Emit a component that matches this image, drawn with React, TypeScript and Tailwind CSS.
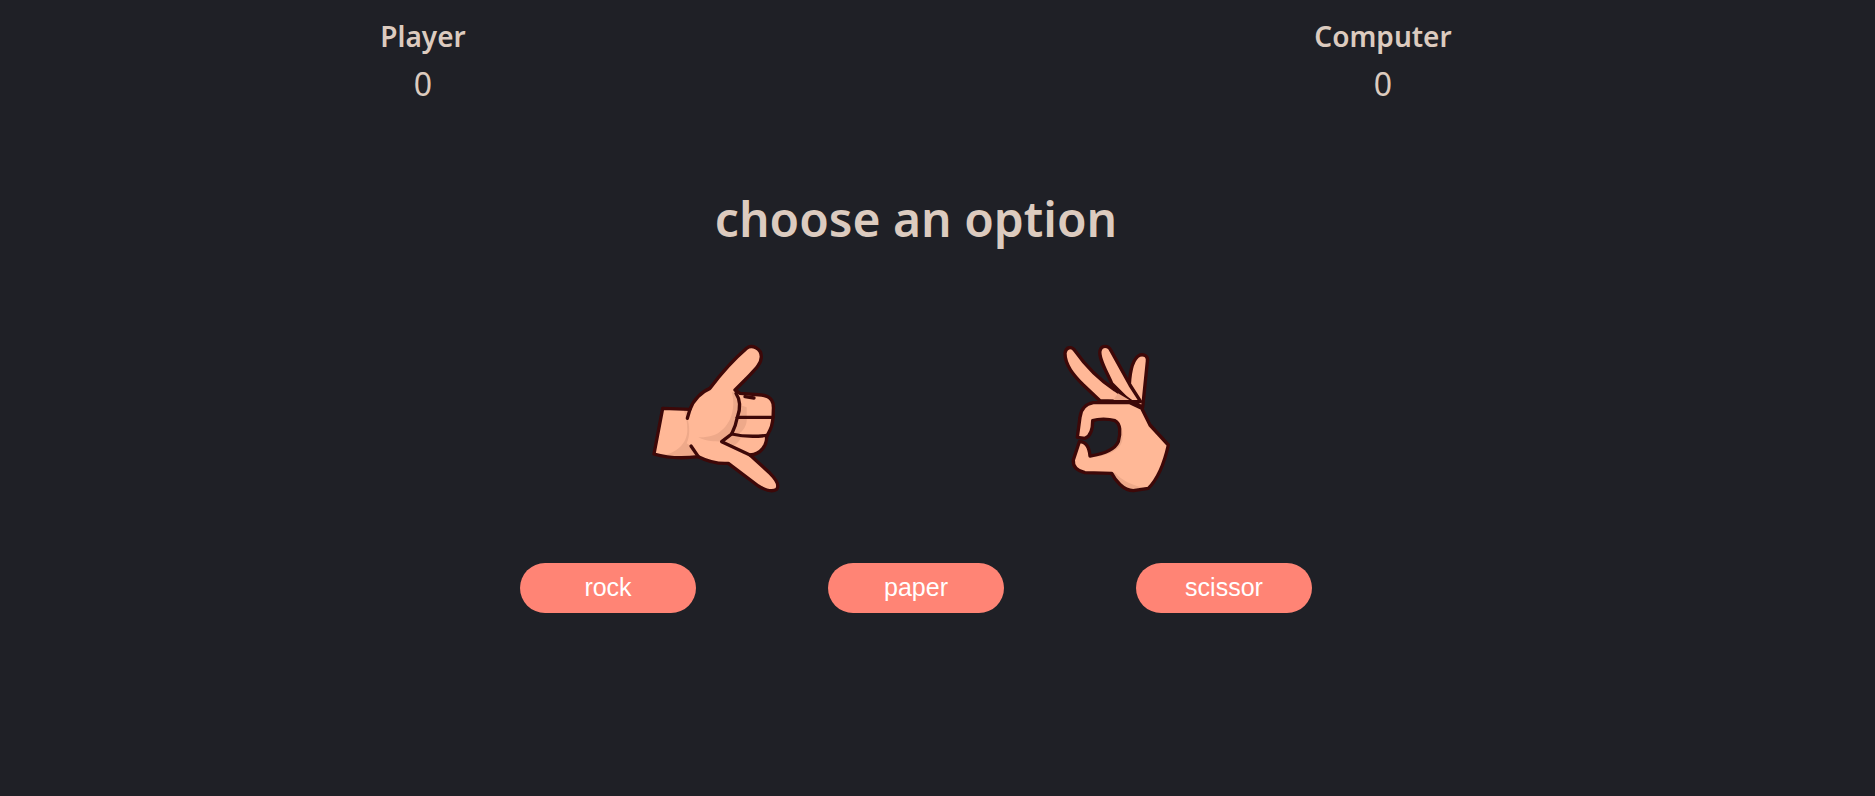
function ShakaHand() {
  const outline =
    "M72 372 L98 235 L180 238 C190 210 215 185 240 175 C270 135 315 85 350 55 C365 42 394 55 394 80 C394 105 368 125 345 150 L315 180 L330 190 L395 195 C425 200 432 215 430 240 C430 265 428 285 420 300 L410 320 C410 345 395 372 360 375 L420 430 C435 445 450 465 440 478 C425 488 405 480 385 468 L295 400 C265 402 235 395 205 380 C165 385 115 385 72 372 Z"
  return (
    <svg width="180" height="170" viewBox="0 0 540 510" fill="none" strokeLinejoin="round" strokeLinecap="round">
      <path d={outline} fill="#ffb897" />
      <path d="M160 238 L180 238 L172 265 C180 290 180 320 170 340 L183 348 L205 380 C160 385 125 384 95 376 C140 370 172 340 172 300 C172 275 168 255 160 238 Z" fill="#eea98a" />
      <path d="M305 185 C318 230 305 280 270 305 C255 318 225 322 205 322 C230 335 255 335 275 335 L305 312 L322 262 L330 225 L320 190 Z" fill="#eea98a" />
      <path d="M322 265 L350 265 C352 285 340 305 322 314 L305 312 Z M275 335 L305 312 L335 316 C330 335 315 350 300 348 Z" fill="#eea98a" />
      <path d="M330 225 L350 232 L350 265 L322 262 Z" fill="#eea98a" />
      <g stroke="#3d0808" strokeWidth="10">
        <path d={outline} />
        <path d="M180 238 L172 265" />
        <path d="M183 348 L205 380" />
        <path d="M318 190 C335 215 330 240 322 262 C318 285 312 298 305 312 L275 335 L360 375" />
        <path d="M322 262 L428 262" />
        <path d="M305 312 C340 320 380 320 412 316" />
        <path d="M345 200 L372 204" />
      </g>
    </svg>
  )
}

function OkHand() {
  const palm =
    "M130 218 C105 222 92 240 90 262 L82 322 L105 325 C122 318 128 300 128 272 C145 266 175 266 195 272 C212 280 212 310 205 335 C195 358 160 372 120 378 C118 355 112 335 88 335 L70 390 C68 410 80 422 105 428 L185 430 C195 450 220 482 250 482 L295 475 C325 445 345 390 355 345 L300 285 L275 235 L240 218 Z"
  return (
    <svg width="180" height="170" viewBox="0 0 540 510" fill="none" strokeLinejoin="round" strokeLinecap="round">
      <path d="M238 165 C240 125 248 85 270 75 C285 72 295 80 292 95 L278 232 L250 215 Z" fill="#ffb897" stroke="#3d0808" strokeWidth="10" />
      <path d="M185 160 C170 125 145 85 150 62 C155 45 175 45 183 62 L240 165 L272 215 L240 215 Z" fill="#ffb897" stroke="#3d0808" strokeWidth="10" />
      <path d="M150 212 L100 165 C70 135 45 105 45 70 C48 50 65 48 75 62 C105 105 150 150 195 180 L245 215 Z" fill="#ffb897" stroke="#3d0808" strokeWidth="10" />
      <path d="M190 210 L204 190 L238 210 Z" fill="#eea98a" />
      <path d={palm} fill="#ffb897" />
      <path d="M195 272 C212 280 212 310 205 335 C195 358 160 372 120 378 L125 382 C170 378 208 362 216 335 C222 305 216 280 195 272 Z" fill="#eea98a" />
      <path d="M185 430 L195 428 C215 450 245 468 295 475 L250 482 C220 482 195 450 185 430 Z" fill="#eea98a" />
      <path d="M290 270 L300 285 L355 345 L345 338 L296 290 Z" fill="#eea98a" />
      <path d={palm} stroke="#3d0808" strokeWidth="10" />
    </svg>
  )
}

export default function App() {
  const btn =
    "w-[176px] h-[50px] rounded-[25px] bg-[#ff8475] text-white text-[25px] font-['Liberation_Sans',sans-serif]"
  return (
    <div className="h-[796px] bg-[#1f2026] text-[#dccbbf] font-['Noto_Sans',sans-serif] overflow-hidden">
      <div className="flex pl-[379px] pt-[18px]">
        <div className="w-[88px] flex flex-col items-center">
          <h2 className="text-[28px] font-semibold leading-[36px] whitespace-nowrap">Player</h2>
          <p className="text-[32px] leading-[36px] mt-3">0</p>
        </div>
        <div className="w-[138px] ml-[847px] flex flex-col items-center">
          <h2 className="text-[28px] font-semibold leading-[36px] whitespace-nowrap">Computer</h2>
          <p className="text-[32px] leading-[36px] mt-3">0</p>
        </div>
      </div>
      <div className="w-[1832px]">
        <h1 className="text-center text-5xl font-semibold leading-[60px] mt-[87px]">choose an option</h1>
      </div>
      <div className="flex pl-[630px] gap-[240px] mt-[81px]">
        <ShakaHand />
        <OkHand />
      </div>
      <div className="flex pl-[520px] gap-[132px] mt-[63px]">
        <button className={btn}>rock</button>
        <button className={btn}>paper</button>
        <button className={btn}>scissor</button>
      </div>
    </div>
  )
}
